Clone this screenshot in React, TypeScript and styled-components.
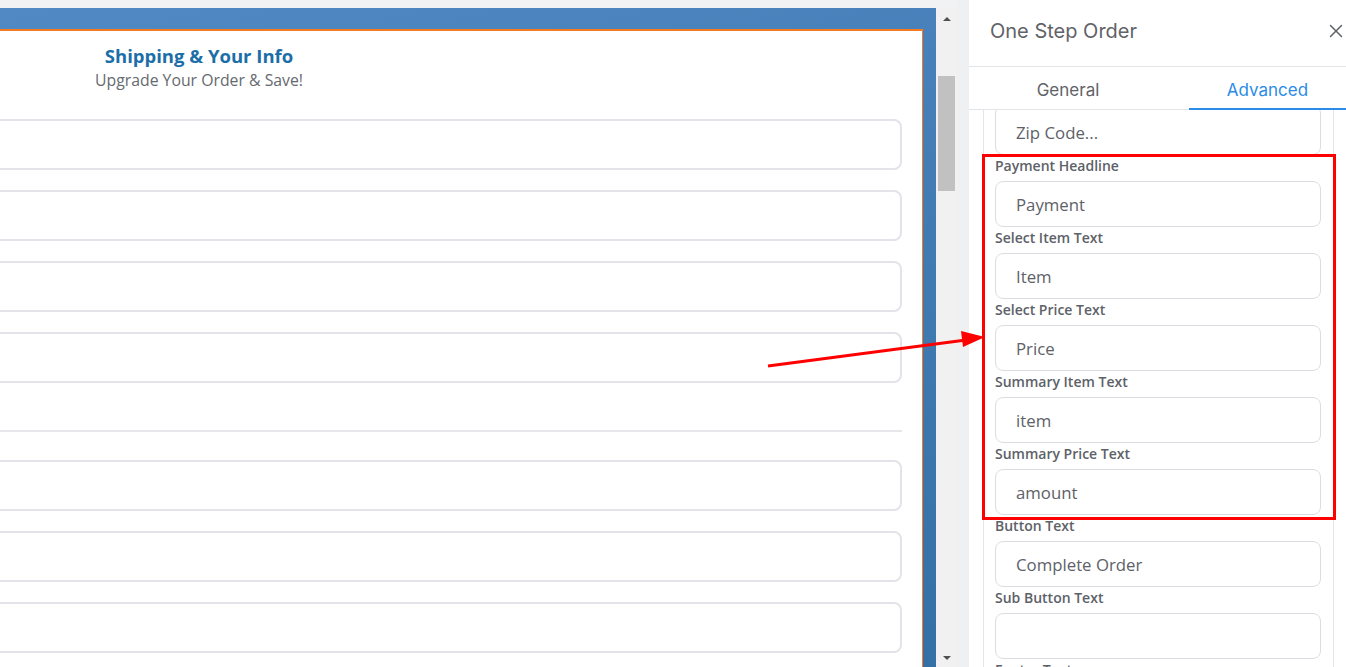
import React from 'react'
import styled, { createGlobalStyle } from 'styled-components'
import { X } from 'lucide-react'

const GlobalStyle = createGlobalStyle`
  html, body {
    margin: 0;
    padding: 0;
    overflow: hidden;
    background: #f1f2f4;
  }
  * {
    box-sizing: border-box;
  }
`

const Page = styled.div`
  position: relative;
  display: flex;
  width: 1346px;
  height: 667px;
  overflow: hidden;
  font-family: 'Open Sans', 'Liberation Sans', sans-serif;
`

const Editor = styled.div`
  display: flex;
  width: 957px;
  flex-shrink: 0;
  padding-top: 8px;
  background: #f1f2f4;
`

const Stage = styled.div`
  flex: 1;
  overflow: hidden;
  padding: 21px 13px 0 0;
  background: linear-gradient(165deg, #5089c3 0%, #447db6 45%, #3470a5 100%);
`

const Card = styled.div`
  width: calc(100% + 525px);
  height: 100%;
  margin-left: -525px;
  padding: 0 20px 0 21px;
  background: #ffffff;
  border-top: 2px solid #f47b20;
  border-right: 1px solid #f47b20;
`

const Header = styled.div`
  text-align: center;
  padding-top: 13px;
  margin-bottom: 28px;
`

const Title = styled.h2`
  margin: 0;
  font-size: 18.5px;
  line-height: 24px;
  font-weight: 700;
  color: #1b6ea7;
`

const Subtitle = styled.p`
  margin: 2px 0 0;
  font-size: 15.8px;
  line-height: 21px;
  color: #666a70;
`

const FieldStack = styled.div`
  display: flex;
  flex-direction: column;
  gap: 20px;
`

const FormInput = styled.div`
  height: 51px;
  border: 2px solid #e3e4e9;
  border-radius: 8px;
  background: #ffffff;
`

const Divider = styled.div`
  height: 2px;
  margin: 27px 0 8px;
  background: #e6e7eb;
`

const Scrollbar = styled.div`
  display: flex;
  flex-direction: column;
  width: 21px;
  background: #f1f1f1;
`

const ScrollButton = styled.div<{ $down?: boolean }>`
  display: flex;
  justify-content: center;
  align-items: ${p => (p.$down ? 'flex-end' : 'flex-start')};
  height: 21px;
  padding: ${p => (p.$down ? '0 0 7px' : '9px 0 0')};
`

const Triangle = styled.span<{ $down?: boolean }>`
  width: 0;
  height: 0;
  border-left: 4px solid transparent;
  border-right: 4px solid transparent;
  ${p => (p.$down ? 'border-top: 4px solid #505050;' : 'border-bottom: 4px solid #505050;')}
`

const Track = styled.div`
  flex: 1;
  padding: 47px 2px 0;
`

const Thumb = styled.div`
  height: 115px;
  background: #c1c1c1;
`

const Gutter = styled.div`
  width: 12px;
  flex-shrink: 0;
  background: #eff0f2;
`

const Panel = styled.aside`
  display: flex;
  flex-direction: column;
  flex: 1;
  background: #ffffff;
`

const PanelHeader = styled.div`
  display: flex;
  align-items: center;
  justify-content: space-between;
  height: 67px;
  padding: 0 0 4px 21px;
  border-bottom: 1px solid #e2e4e8;
`

const PanelTitle = styled.h3`
  margin: 0;
  font-family: Inter, 'Liberation Sans', sans-serif;
  font-size: 20px;
  font-weight: 400;
  color: #5f6368;
`

const CloseButton = styled.button`
  display: flex;
  margin-right: -1px;
  padding: 0;
  border: none;
  background: transparent;
  color: #5f6368;
  cursor: pointer;
`

const TabBar = styled.div`
  display: flex;
  justify-content: space-between;
  height: 43px;
  border-bottom: 1px solid #e2e4e8;
`

const Tab = styled.div<{ $active?: boolean; $width: number }>`
  display: flex;
  align-items: center;
  justify-content: center;
  width: ${p => p.$width}px;
  margin-bottom: -1px;
  padding-top: 5px;
  font-family: Inter, 'Liberation Sans', sans-serif;
  font-size: 17px;
  color: ${p => (p.$active ? '#2b8be6' : '#5f6368')};
  border-bottom: 2px solid ${p => (p.$active ? '#2b8be6' : 'transparent')};
`

const PanelBody = styled.div`
  flex: 1;
  overflow: hidden;
`

const Settings = styled.div`
  display: flex;
  flex-direction: column;
  gap: 2px;
  height: 100%;
  margin: 0 12px 0 14px;
  padding: 0 12px 0 11px;
  border-left: 1px solid #e4e5ea;
  border-right: 1px solid #e4e5ea;
`

const Field = styled.div`
  display: flex;
  flex-direction: column;
`

const Label = styled.label`
  margin-bottom: 6px;
  font-size: 14px;
  line-height: 18px;
  font-weight: 600;
  color: #5d6168;
`

const TextInput = styled.div<{ $first?: boolean }>`
  display: flex;
  align-items: center;
  flex-shrink: 0;
  height: ${p => (p.$first ? '50px' : '46px')};
  margin-top: ${p => (p.$first ? '-5px' : '0')};
  padding: ${p => (p.$first ? '4px 0 0 20px' : '0 0 0 20px')};
  border: 1px solid #dcdde3;
  border-radius: 8px;
  font-size: 16.8px;
  color: #5d6168;
`

const Highlight = styled.div`
  position: absolute;
  left: 982px;
  top: 154px;
  width: 354px;
  height: 366px;
  border: 3px solid #ff0000;
  pointer-events: none;
`

const Arrow = styled.svg`
  position: absolute;
  left: 0;
  top: 0;
  pointer-events: none;
`

const settings = [
  { label: 'Payment Headline', value: 'Payment' },
  { label: 'Select Item Text', value: 'Item' },
  { label: 'Select Price Text', value: 'Price' },
  { label: 'Summary Item Text', value: 'item' },
  { label: 'Summary Price Text', value: 'amount' },
  { label: 'Button Text', value: 'Complete Order' },
  { label: 'Sub Button Text', value: '' },
  { label: 'Footer Text', value: '' }
]

export default function App() {
  return (
    <>
      <GlobalStyle />
      <Page>
        <Editor>
          <Stage>
            <Card>
              <Header>
                <Title>Shipping &amp; Your Info</Title>
                <Subtitle>Upgrade Your Order &amp; Save!</Subtitle>
              </Header>
              <FieldStack>
                <FormInput />
                <FormInput />
                <FormInput />
                <FormInput />
                <Divider />
                <FormInput />
                <FormInput />
                <FormInput />
              </FieldStack>
            </Card>
          </Stage>
          <Scrollbar>
            <ScrollButton>
              <Triangle />
            </ScrollButton>
            <Track>
              <Thumb />
            </Track>
            <ScrollButton $down>
              <Triangle $down />
            </ScrollButton>
          </Scrollbar>
        </Editor>
        <Gutter />
        <Panel>
          <PanelHeader>
            <PanelTitle>One Step Order</PanelTitle>
            <CloseButton aria-label="Close">
              <X size={22} strokeWidth={1.6} />
            </CloseButton>
          </PanelHeader>
          <TabBar>
            <Tab $width={198}>General</Tab>
            <Tab $width={157} $active>Advanced</Tab>
          </TabBar>
          <PanelBody>
            <Settings>
              <TextInput $first>Zip Code...</TextInput>
              {settings.map(item => (
                <Field key={item.label}>
                  <Label>{item.label}</Label>
                  <TextInput>{item.value}</TextInput>
                </Field>
              ))}
            </Settings>
          </PanelBody>
        </Panel>
        <Highlight />
        <Arrow width={1346} height={667} viewBox="0 0 1346 667">
          <line x1={768} y1={366} x2={966} y2={340} stroke="#ff0000" strokeWidth={3} />
          <polygon points="985,337 961,331 963,347" fill="#ff0000" />
        </Arrow>
      </Page>
    </>
  )
}
